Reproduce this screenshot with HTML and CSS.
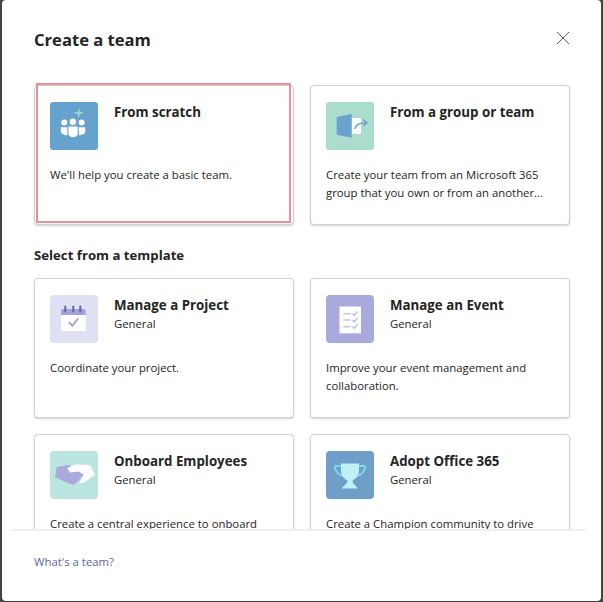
FILE: index.html
```html
<!DOCTYPE html>
<html lang="en">
<head>
<meta charset="utf-8">
<title>Create a team</title>
<link rel="stylesheet" href="styles.css">
</head>
<body>
<div class="dialog">
  <header class="dialog-header">
    <h1 class="dialog-title">Create a team</h1>
    <button class="close" aria-label="Close">
      <svg width="14" height="14" viewBox="0 0 14 14"><path d="M1 1 13 13M13 1 1 13" stroke="#5c5c5c" stroke-width="1" fill="none"/></svg>
    </button>
  </header>
  <main class="dialog-body">
    <section class="card-grid">
      <article class="card">
        <div class="card-top">
          <svg class="icon" viewBox="0 0 48 48"><rect width="48" height="48" rx="3" fill="#65a2cd"/><path d="M28.7 7v8M24.7 11h8" stroke="#a9dcc8" stroke-width="1.4"/><g fill="#fff"><circle cx="14.3" cy="20.500" r="3"/><circle cx="22.800" cy="19.800" r="3.200"/><circle cx="31.600" cy="20.500" r="3"/><path d="M10.800 25.200h6.500v8c-3.400 0-6.500-1.600-6.500-4z"/><path d="M18.400 24.400h9.300v7.600c0 2-2.400 3.200-4.600 3.200s-4.700-1.200-4.700-3.200z"/><path d="M28.800 25.200h6.500v4c0 2.400-3.100 4-6.500 4z"/></g></svg>
          <div class="card-heading"><h2 class="card-title">From scratch</h2></div>
        </div>
        <p class="card-desc">We'll help you create a basic team.</p>
      </article>
      <article class="card">
        <div class="card-top">
          <svg class="icon" viewBox="0 0 48 48"><rect width="48" height="48" rx="3" fill="#abddcf"/><rect x="25.500" y="16" width="9.500" height="16" fill="#fff"/><path d="M10.700 15 25.700 12v23.700l-15-3z" fill="#69a3d0"/><path d="M29 27c.6-4 4-6.300 11-6.300M37.200 17.400l3.600 3.300-3.600 3.300" fill="none" stroke="#69a3d0" stroke-width="1.500"/></svg>
          <div class="card-heading"><h2 class="card-title">From a group or team</h2></div>
        </div>
        <p class="card-desc">Create your team from an Microsoft 365 group that you own or from an another...</p>
      </article>
    </section>
    <h2 class="section-label">Select from a template</h2>
    <section class="card-grid">
      <article class="card">
        <div class="card-top">
          <svg class="icon" viewBox="0 0 48 48"><rect width="48" height="48" rx="4" fill="#e0e0f4"/><rect x="11" y="20" width="24.700" height="16" fill="#fff"/><path d="M11 16a2 2 0 0 1 2-2h20.700a2 2 0 0 1 2 2v4H11z" fill="#a3a3dc"/><path d="M15.300 11.500v5M23.300 11.500v5M30.300 11.500v5" stroke="#6264a7" stroke-width="2" stroke-linecap="round"/><path d="M19 27.300l3.300 3.400 6-7.400" fill="none" stroke="#a9a9de" stroke-width="2"/></svg>
          <div class="card-heading"><h2 class="card-title">Manage a Project</h2><p class="card-sub">General</p></div>
        </div>
        <p class="card-desc">Coordinate your project.</p>
      </article>
      <article class="card">
        <div class="card-top">
          <svg class="icon" viewBox="0 0 48 48"><rect width="48" height="48" rx="4" fill="#a9a9de"/><rect x="13.500" y="11.500" width="21.500" height="26.800" fill="#fff"/><path d="M17.300 18.700h7.400M17.300 25h7.400M17.300 31.700h7.400" stroke="#c5c5e8" stroke-width="1.500"/><path d="M26.500 18.500l1.800 1.800 3.200-3.800M26.500 25l1.800 1.800 3.200-3.800M26.500 31.500l1.800 1.800 3.200-3.800" fill="none" stroke="#b5b5e4" stroke-width="1.300"/></svg>
          <div class="card-heading"><h2 class="card-title">Manage an Event</h2><p class="card-sub">General</p></div>
        </div>
        <p class="card-desc">Improve your event management and collaboration.</p>
      </article>
      <article class="card">
        <div class="card-top">
          <svg class="icon" viewBox="0 0 48 48"><rect width="48" height="48" rx="4" fill="#bbe6e0"/><path d="M6.700 16 19 14 33.500 23.500 28.500 30 23.500 34 16.500 31.500 5 26z" fill="#a9a9de"/><path d="M17 17 25 13.500 40 14 45 23.500 33.500 32 29 31.500 34 24 29 20.500 20 21.500z" fill="#fff"/></svg>
          <div class="card-heading"><h2 class="card-title">Onboard Employees</h2><p class="card-sub">General</p></div>
        </div>
        <p class="card-desc">Create a central experience to onboard</p>
      </article>
      <article class="card">
        <div class="card-top">
          <svg class="icon" viewBox="0 0 48 48"><rect width="48" height="48" rx="4" fill="#6f9fc8"/><path d="M15 15h-5c-1 0-1.500.8-1 2 1 4 4 7 8 8M33 15h5c1 0 1.500.8 1 2-1 4-4 7-8 8" fill="none" stroke="#7fdbe6" stroke-width="1.800"/><path d="M15 12.500h18V20c0 5-4 8.500-6.500 9.500v2.500H21.500v-2.500C19 28.500 15 25 15 20z" fill="#c0f0f3"/><path d="M21.500 30h5c.5 3 2.500 4 5.500 7.500H15.500c3-3.500 5.500-4.500 6-7.500z" fill="#c0f0f3"/></svg>
          <div class="card-heading"><h2 class="card-title">Adopt Office 365</h2><p class="card-sub">General</p></div>
        </div>
        <p class="card-desc">Create a Champion community to drive</p>
      </article>
    </section>
  </main>
  <footer class="dialog-footer"><a class="help-link" href="#">What's a team?</a></footer>
  <div class="highlight"></div>
</div>
</body>
</html>
```
FILE: styles.css
```css
* { box-sizing: border-box; }
html, body { height: 100%; }
body {
  margin: 0;
  background: #444;
  font-family: "Open Sans", "Liberation Sans", sans-serif;
  color: #242424;
  overflow: hidden;
}
.dialog {
  position: relative;
  width: 599px;
  height: 601px;
  margin-left: 2px;
  background: #fff;
  border-radius: 4px;
  display: flex;
  flex-direction: column;
  overflow: hidden;
}
.dialog-header {
  height: 85px;
  flex: none;
  padding: 28px 31px 0 32px;
  display: flex;
  justify-content: space-between;
  align-items: flex-start;
}
.dialog-title {
  margin: 0;
  font-size: 16.600px;
  line-height: 24px;
  font-weight: 700;
}
.close {
  width: 14px;
  height: 14px;
  padding: 0;
  margin-top: 3px;
  border: 0;
  background: none;
  display: block;
}
.close svg { display: block; }
.dialog-body {
  flex: 1;
  min-height: 0;
  overflow: hidden;
  padding: 0 31px 0 32px;
}
.card-grid {
  display: grid;
  grid-template-columns: 260px 260px;
  gap: 16px;
}
.card {
  height: 140px;
  border: 1px solid #d1d1d1;
  border-radius: 4px;
  background: #fff;
  box-shadow: 0 1px 2px rgba(0, 0, 0, .18);
  padding: 16px 15px 0;
}
.card-top {
  display: flex;
  gap: 16px;
  height: 48px;
}
.icon {
  width: 48px;
  height: 48px;
  flex: none;
  display: block;
}
.card-heading { padding-top: 1px; }
.card-title {
  margin: 0;
  font-size: 13.300px;
  line-height: 18px;
  font-weight: 700;
}
.card-sub {
  margin: 1px 0 0;
  font-size: 11.300px;
  line-height: 18px;
}
.card-desc {
  margin: 16px 0 0;
  font-size: 11.350px;
  line-height: 17.500px;
}
.section-label {
  margin: 21px 0 14px;
  font-size: 13.200px;
  line-height: 18px;
  font-weight: 700;
}
.dialog-footer {
  flex: none;
  height: 72px;
  margin: 0 15px 0 8px;
  border-top: 2px solid #f0f0f0;
  padding: 22px 0 0 24px;
  font-size: 11.350px;
  line-height: 18px;
}
.help-link {
  color: #6264a7;
  text-decoration: none;
}
.highlight {
  position: absolute;
  left: 34px;
  top: 83px;
  width: 255px;
  height: 140px;
  border: 2px solid #f38d94;
  pointer-events: none;
}
```
